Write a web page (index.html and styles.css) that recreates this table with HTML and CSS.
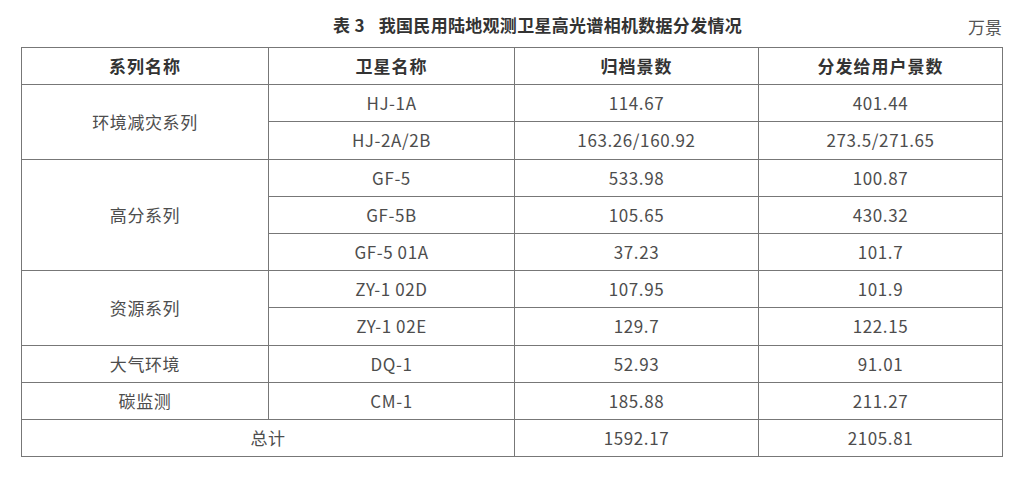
FILE: index.html
```html
<!DOCTYPE html>
<html lang="zh">
<head>
<meta charset="utf-8">
<link rel="stylesheet" href="styles.css">
</head>
<body>
<div class="wrap">
  <div class="caption">
    <div class="title"><span class="num">表 3</span>我国民用陆地观测卫星高光谱相机数据分发情况</div>
    <div class="unit">万景</div>
  </div>
  <table class="data">
    <colgroup>
      <col class="c1"><col class="c2"><col class="c3"><col class="c4">
    </colgroup>
    <thead>
      <tr><th>系列名称</th><th>卫星名称</th><th>归档景数</th><th>分发给用户景数</th></tr>
    </thead>
    <tbody>
      <tr><td rowspan="2">环境减灾系列</td><td>HJ-1A</td><td>114.67</td><td>401.44</td></tr>
      <tr><td>HJ-2A/2B</td><td>163.26/160.92</td><td>273.5/271.65</td></tr>
      <tr><td rowspan="3">高分系列</td><td>GF-5</td><td>533.98</td><td>100.87</td></tr>
      <tr><td>GF-5B</td><td>105.65</td><td>430.32</td></tr>
      <tr><td>GF-5 01A</td><td>37.23</td><td>101.7</td></tr>
      <tr><td rowspan="2">资源系列</td><td>ZY-1 02D</td><td>107.95</td><td>101.9</td></tr>
      <tr><td>ZY-1 02E</td><td>129.7</td><td>122.15</td></tr>
      <tr><td>大气环境</td><td>DQ-1</td><td>52.93</td><td>91.01</td></tr>
      <tr><td>碳监测</td><td>CM-1</td><td>185.88</td><td>211.27</td></tr>
      <tr><td colspan="2">总计</td><td>1592.17</td><td>2105.81</td></tr>
    </tbody>
  </table>
</div>
</body>
</html>
```
FILE: styles.css
```css
html, body {
  margin: 0;
  padding: 0;
  background: #ffffff;
}
body {
  font-family: "Noto Sans CJK SC", "Noto Sans", sans-serif;
  color: #4a4a4a;
}
.wrap {
  padding: 0 27px 0 21px;
}
.caption {
  height: 47px;
  display: flex;
  align-items: center;
  position: relative;
}
.title {
  flex: 1;
  text-align: center;
  padding-left: 52px;
  font-size: 17px;
  font-weight: bold;
  color: #333;
  letter-spacing: 0.3px;
  padding-top: 2px;
}
.title .num {
  margin-right: 14px;
}
.unit {
  position: absolute;
  right: 0;
  top: 14px;
  font-size: 17px;
  color: #555;
}
.data {
  width: 981px;
  border-collapse: collapse;
  table-layout: fixed;
  font-size: 17px;
}
.c1 { width: 247px; }
.c2 { width: 246px; }
.c3 { width: 244px; }
.c4 { width: 244px; }
.data th, .data td {
  border: 1.5px solid #777;
  text-align: center;
  vertical-align: middle;
  height: 37.2px;
  padding: 0;
  line-height: 20px;
  box-sizing: border-box;
}
.data th {
  font-weight: bold;
  color: #333;
  letter-spacing: 1px;
}
.data td {
  color: #4d4d4d;
  letter-spacing: 0.6px;
}
```
